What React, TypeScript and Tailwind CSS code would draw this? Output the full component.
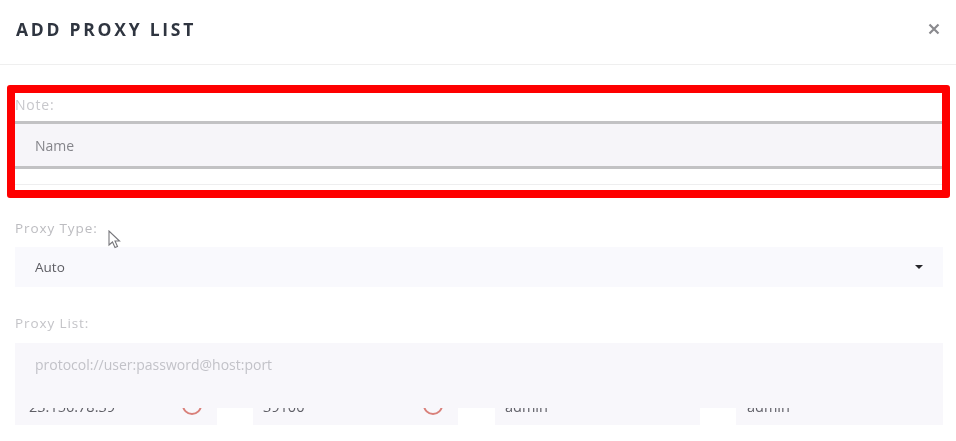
export default function App() {
  const font = { fontFamily: '"Open Sans", "Noto Sans", sans-serif' };
  return (
    <div className="relative w-[956px] h-[441px] overflow-hidden bg-white blur-[0.5px]" style={font}>
      <header className="flex h-[65px] items-center justify-between border-b border-[#efefef] pl-4 pr-[16px] pb-[6px]">
        <h1 className="text-[17.5px] font-bold tracking-[2.75px] text-[#2f3540]">ADD PROXY LIST</h1>
        <svg width="12" height="12" viewBox="0 0 12 12" className="text-[#8a8a8e]">
          <path d="M1.5 1.5l9 9M10.5 1.5l-9 9" stroke="currentColor" strokeWidth="2.2" />
        </svg>
      </header>

      <main className="flex flex-col pl-[15px] pr-[13px]">
        <section className="flex h-[120px] flex-col pt-[31px]">
          <label className="h-[25px] text-[14px] leading-[18px] tracking-[0.8px] text-[#c8c8cc]">Note:</label>
          <div className="flex h-[48px] items-center border-y-[3px] border-[#c2c2c4] bg-[#f6f5f9] pl-5 text-[14px] text-[#85858b]">
            Name
          </div>
          <div className="mt-[15px] h-px bg-[#eeeeef]" />
        </section>

        <section className="mt-[8px] flex flex-col pt-[26px]">
          <label className="h-[28px] text-[13.5px] leading-[18px] tracking-[0.9px] text-[#bcbcc0]">Proxy Type:</label>
          <div className="flex h-[40px] items-center justify-between bg-[#f9f9fd] pl-5 pr-[20px] text-[13.5px] font-medium text-[#5d5d63]">
            Auto
            <span className="h-0 w-0 border-x-[4px] border-t-[4px] border-x-transparent border-t-[#26262a]" />
          </div>
        </section>

        <section className="mt-[27px] flex flex-col">
          <label className="h-[29px] text-[13.5px] leading-[18px] tracking-[0.9px] text-[#c4c4c8]">Proxy List:</label>
          <div className="h-[65px] bg-[#f8f7fb] pl-5 pt-[11px] text-[14px] text-[#c2c2c8]">
            protocol://user:password@host:port
          </div>
          <div className="flex h-[17px] bg-[#f8f7fb] text-[14.5px] leading-[17px] text-[#5f5f66]">
            <div className="relative flex w-[202px] overflow-hidden pl-[14px]">
              <span className="mt-[-10px]">23.156.78.39</span>
              <span className="absolute left-[167px] top-[-13px] h-[20px] w-[20px] rounded-full border-2 border-[#d9807a]" />
            </div>
            <div className="w-[36px] bg-white" />
            <div className="flex w-[205px] overflow-hidden pl-[10px]">
              <span className="mt-[-10px]">39100</span>
              <span className="ml-[119px] mt-[-13px] h-[20px] w-[20px] shrink-0 rounded-full border-2 border-[#d9807a]" />
            </div>
            <div className="w-[37px] bg-white" />
            <div className="flex w-[205px] overflow-hidden pl-[10px]">
              <span className="mt-[-10px]">admin</span>
            </div>
            <div className="w-[36px] bg-white" />
            <div className="flex flex-1 overflow-hidden pl-[11px]">
              <span className="mt-[-10px]">admin</span>
            </div>
          </div>
        </section>
      </main>

      {/* Red annotation rectangle over the Note field */}
      <div className="absolute left-[7px] top-[85px] h-[113px] w-[943px] rounded-[3px] border-[8px] border-[#fe0000]" />

      {/* Mouse cursor */}
      <svg width="14" height="20" viewBox="0 0 14 20" className="absolute left-[108px] top-[230px]">
        <path d="M1 1v14l3.5-3 2.5 5.5 2.5-1-2.5-5.5h4.5z" fill="#fff" stroke="#77777c" strokeWidth="1.1" />
      </svg>
    </div>
  );
}
